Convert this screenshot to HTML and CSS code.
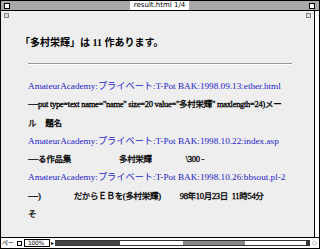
FILE: index.html
```html
<!DOCTYPE html>
<html lang="ja">
    <head>
        <meta charset="utf-8">
        <title>result.html</title>
        <link rel="stylesheet" href="styles.css">
    </head>
    <body>
        <div class="window">
            <div class="titlebar">
                <span class="box close"></span>
                <span class="title">result.html 1/4</span>
                <span class="box zoom"></span>
            </div>
            <div class="main">
                <div class="page">
                    <div class="icons">
                        <span class="mini"></span>
                        <span class="mini right"></span>
                    </div>
                    <h1 class="heading">「多村栄輝」は 11 作あります。</h1>
                    <hr class="rule">
                    <p class="line"><a href="#">AmateurAcademy:プライベート:T-Pot BAK:1998.09.13:ether.html</a></p>
                    <p class="line bold">----put type=text name="name" size=20 value="多村栄輝" maxlength=24)メー</p>
                    <p class="line bold">ル<span class="gap1"></span>題名</p>
                    <p class="line"><a href="#">AmateurAcademy:プライベート:T-Pot BAK:1998.10.22:index.asp</a></p>
                    <p class="line bold">----る作品集<span class="gap2"></span>多村栄輝<span class="gap3"></span>\300 -</p>
                    <p class="line"><a href="#">AmateurAcademy:プライベート:T-Pot BAK:1998.10.26:bbsout.pl-2</a></p>
                    <p class="line bold">----)<span class="gap4"></span>だからＥＢを(多村栄輝)<span class="gap5"></span>98年10月23日&nbsp; 11時54分</p>
                    <p class="line bold">そ</p>
                </div>
                <div class="vscroll"></div>
            </div>
            <div class="statusbar">
                <span class="page-label">ぺー</span>
                <span class="sq"></span>
                <span class="zoomval">100%</span>
                <span class="arrow">▸</span>
                <div class="hscroll">
                    <span class="dark"></span>
                    <span class="thumb"></span>
                    <span class="endbox"></span>
                </div>
                <span class="grow">◇</span>
            </div>
        </div>
    </body>
</html>
```

FILE: styles.css
```css
html, body {
    margin: 0;
    padding: 0;
    background: #ffffff;
}

.window {
    width: 320px;
    height: 249px;
    box-sizing: border-box;
    border: 1px solid #000;
    background: #eeeeee;
    display: flex;
    flex-direction: column;
    font-family: "Liberation Serif", "Noto Sans CJK JP", serif;
}

.titlebar {
    height: 9px;
    background: #a9a9a9;
    border-bottom: 1px solid #000;
    display: flex;
    align-items: center;
    justify-content: space-between;
    padding: 0 4px 0 3px;
}

.box {
    width: 6px;
    height: 6px;
    background: #fff;
    border: 1px solid #000;
    box-sizing: border-box;
}

.title {
    background: #fff;
    font-family: "DejaVu Sans", sans-serif;
    font-size: 7px;
    line-height: 9px;
    padding: 0 4px;
    color: #000;
}

.main {
    flex: 1;
    display: flex;
    min-height: 0;
}

.page {
    flex: 1;
    border-right: 1px solid #000;
    padding: 0 22px 0 27px;
    overflow: hidden;
}

.vscroll {
    width: 4px;
    background: #fff;
}

.icons {
    display: flex;
    justify-content: space-between;
    margin: 2px -19px 0 -24px;
    height: 5px;
}

.mini {
    width: 5px;
    height: 5px;
    border: 1px solid #888;
    box-sizing: border-box;
    background: #ddd;
}

.heading {
    margin: 18px 0 0 -8px;
    font-size: 10px;
    line-height: 14px;
    font-weight: bold;
}

.rule {
    margin: 13px 0 0 0;
    border: 0;
    border-top: 1px solid #999;
    border-bottom: 1px solid #fff;
}

.line {
    margin: 0;
    font-size: 9.2px;
    line-height: 18.3px;
    white-space: nowrap;
}

.line:first-of-type {
    margin-top: 12px;
}

.bold {
    font-size: 8.5px;
    letter-spacing: -0.3px;
    color: #000;
    -webkit-text-stroke: 0.3px #000;
}

.line a {
    color: #2222cc;
    text-decoration: none;
}

.gap1 { display: inline-block; width: 9px; }
.gap2 { display: inline-block; width: 48px; }
.gap3 { display: inline-block; width: 34px; }
.gap4 { display: inline-block; width: 33px; }
.gap5 { display: inline-block; width: 19px; }

.statusbar {
    height: 10px;
    border-top: 1px solid #000;
    background: #fff;
    display: flex;
    align-items: center;
    font-family: "DejaVu Sans", "Noto Sans CJK JP", sans-serif;
    font-size: 6px;
    line-height: 8px;
}

.page-label {
    padding-left: 1px;
    width: 15px;
}

.sq {
    width: 5px;
    height: 5px;
    border: 1px solid #000;
    box-sizing: border-box;
}

.zoomval {
    margin-left: 2px;
    border: 1px solid #000;
    padding: 0 3px;
    height: 6px;
    line-height: 6px;
    width: 18px;
    letter-spacing: -0.3px;
}

.arrow {
    font-size: 6px;
    margin-left: 1px;
}

.hscroll {
    flex: 1;
    height: 4px;
    position: relative;
    border-top: 1px solid #333;
    border-bottom: 1px solid #333;
    margin-left: 1px;
}

.dark {
    position: absolute;
    left: 0;
    width: 65px;
    top: 0;
    height: 4px;
    background: #444;
}

.thumb {
    position: absolute;
    left: 128px;
    width: 62px;
    top: 0;
    height: 4px;
    background: #888;
}

.endbox {
    position: absolute;
    right: 0;
    top: 0;
    width: 4px;
    height: 4px;
    background: #333;
}

.grow {
    width: 9px;
    text-align: center;
    color: #888;
    font-size: 7px;
}
```
